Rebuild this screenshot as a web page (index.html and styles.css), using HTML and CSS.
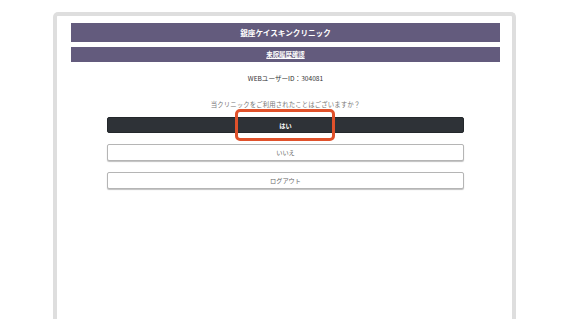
FILE: index.html
```html
<!DOCTYPE html>
<html lang="ja">
<head>
<meta charset="utf-8">
<title>来院履歴確認</title>
<link rel="stylesheet" href="styles.css">
</head>
<body>
<div class="frame">
  <div class="inner">
    <div class="bar bar-title">銀座ケイスキンクリニック</div>
    <div class="bar bar-sub"><span class="sub-text">来院履歴確認</span></div>
    <p class="user-id">WEBユーザーID：304081</p>
    <p class="question">当クリニックをご利用されたことはございますか？</p>
    <div class="buttons">
      <div class="btn-wrap">
        <button class="btn btn-dark">はい</button>
        <span class="highlight"></span>
      </div>
      <button class="btn btn-light">いいえ</button>
      <button class="btn btn-light">ログアウト</button>
    </div>
  </div>
</div>
</body>
</html>
```
FILE: styles.css
```css
html, body {
  margin: 0;
  padding: 0;
  background: #ffffff;
  overflow: hidden;
  height: 319px;
}
body {
  font-family: "Noto Sans CJK JP", "Noto Sans", sans-serif;
  color: #333;
}
.frame {
  margin: 12px 0 0 53px;
  width: 455px;
  height: 303px;
  border: 4px solid #dedede;
  border-bottom: none;
  border-radius: 5px 5px 0 0;
  background: #fff;
}
.inner {
  padding: 7px 12px 0 14px;
  display: flex;
  flex-direction: column;
}
.bar {
  background: #635b7d;
  color: #fff;
  text-align: center;
  font-weight: bold;
}
.bar-title {
  height: 19px;
  line-height: 19px;
  font-size: 7.6px;
}
.bar-sub {
  margin-top: 5px;
  height: 15px;
  line-height: 15px;
  font-size: 6.4px;
}
.sub-text {
  text-decoration: underline;
}
.user-id {
  margin: 12px 0 0;
  text-align: center;
  font-size: 6.6px;
  line-height: 9px;
  color: #333;
}
.question {
  margin: 17px 0 0;
  text-align: center;
  font-size: 6.4px;
  line-height: 9px;
  color: #777;
  letter-spacing: 0.1px;
}
.buttons {
  margin: 8px 36px 0 36px;
  display: flex;
  flex-direction: column;
  gap: 11px;
}
.btn-wrap {
  position: relative;
  display: flex;
}
.btn {
  font-family: "Noto Sans CJK JP", "Noto Sans", sans-serif;
  width: 100%;
  height: 17px;
  padding: 0;
  border-radius: 2px;
  font-size: 6.2px;
  line-height: 15px;
}
.btn-dark {
  height: 16px;
  background: #2e3237;
  border: 1px solid #23272b;
  color: #fff;
  font-weight: bold;
}
.btn-light {
  background: #fff;
  border: 1px solid #b5b5b5;
  box-shadow: 0 1px 1px rgba(0,0,0,0.25);
  color: #666;
}
.highlight {
  position: absolute;
  left: 128px;
  top: -8px;
  width: 94px;
  height: 26px;
  border: 3px solid #e0512b;
  border-radius: 5px;
}
```
